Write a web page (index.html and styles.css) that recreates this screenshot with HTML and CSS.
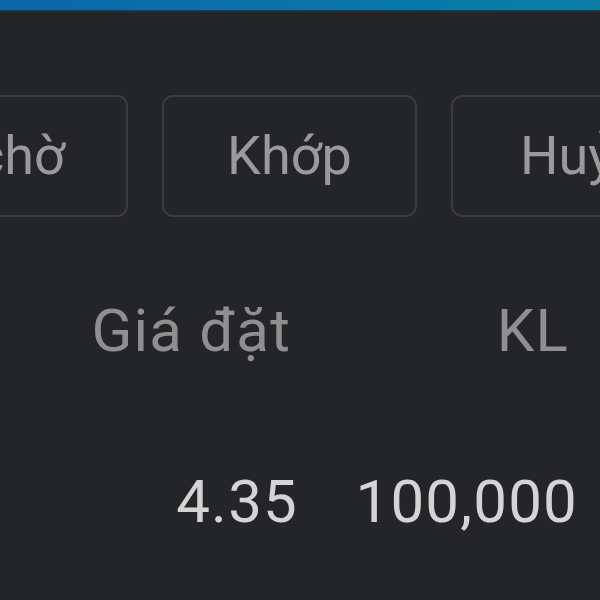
FILE: index.html
```html
<!DOCTYPE html>
<html lang="vi">
<head>
<meta charset="utf-8">
<link rel="stylesheet" href="styles.css">
</head>
<body>
<div class="topbar"></div>
<div class="tabs">
  <div class="tab tab-first">Đang chờ</div>
  <div class="tab">Khớp</div>
  <div class="tab tab-last">Huỷ</div>
</div>
<div class="row head">
  <div class="c1">Giá đặt</div>
  <div class="c2">KL</div>
</div>
<div class="row vals">
  <div class="c1">4.35</div>
  <div class="c2">100,000</div>
</div>
</body>
</html>
```
FILE: styles.css
```css
html, body {
  margin: 0;
  padding: 0;
  background: #242528;
  width: 600px;
  height: 600px;
  overflow: hidden;
  font-family: Roboto, "Noto Sans", sans-serif;
}
.topbar {
  height: 10px;
  background: linear-gradient(90deg, #0b66a9 0%, #0a73ab 50%, #0a80a7 100%);
  box-shadow: 0 1px 2px rgba(10, 110, 170, 0.5);
}
.tabs {
  display: flex;
  gap: 34px;
  margin-top: 85px;
  margin-left: -127px;
}
.tab {
  flex: 0 0 auto;
  width: 255px;
  height: 122px;
  box-sizing: border-box;
  border: 2px solid #3b3c3f;
  border-radius: 11px;
  display: flex;
  align-items: center;
  justify-content: center;
  color: #9a9a9b;
  font-size: 54px;
  line-height: 64px;
  white-space: nowrap;
  overflow: hidden;
}
.tab-first {
  justify-content: flex-end;
  padding-right: 61px;
}
.tab-last {
  justify-content: flex-start;
  padding-left: 67px;
}
.row {
  display: grid;
  grid-template-columns: 298px 280px;
  font-size: 60px;
  line-height: 68px;
  letter-spacing: 1.2px;
}
.row > div {
  text-align: right;
  white-space: nowrap;
}
.head {
  margin-top: 80px;
  color: #8f8f90;
}
.head .c1 { padding-right: 7px; }
.head .c2 { padding-right: 9px; }
.vals {
  margin-top: 103px;
  color: #d4d4d5;
}
```
